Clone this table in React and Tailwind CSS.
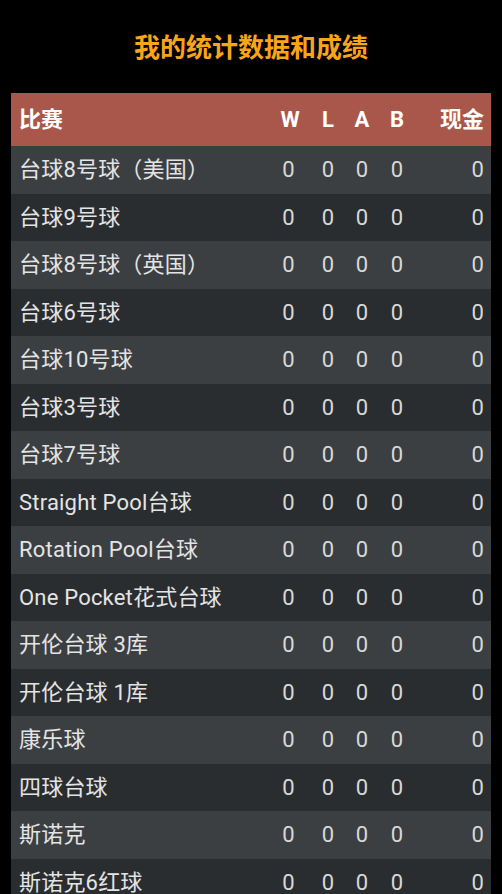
const rows = [
  "台球8号球（美国）",
  "台球9号球",
  "台球8号球（英国）",
  "台球6号球",
  "台球10号球",
  "台球3号球",
  "台球7号球",
  "Straight Pool台球",
  "Rotation Pool台球",
  "One Pocket花式台球",
  "开伦台球 3库",
  "开伦台球 1库",
  "康乐球",
  "四球台球",
  "斯诺克",
  "斯诺克6红球",
];

const font = { fontFamily: "Roboto, 'Noto Sans CJK SC', sans-serif" };

export default function App() {
  return (
    <div className="min-h-screen bg-black" style={font}>
      <div className="flex h-[93px] items-center justify-center pt-[3px]">
        <h1 className="text-[26px] font-bold text-[#f9a51a]">我的统计数据和成绩</h1>
      </div>
      <div className="mx-[11px]">
        <div className="flex h-[53px] items-center bg-[#a9574a] pl-[8px] pr-[7px] text-[22px] font-bold text-white">
          <div className="flex-1">比赛</div>
          <div className="w-[38px] text-center">W</div>
          <div className="w-[38px] text-center">L</div>
          <div className="w-[30px] text-center">A</div>
          <div className="w-[40px] text-center">B</div>
          <div className="w-[67px] text-right">现金</div>
        </div>
        {rows.map((name, i) => (
          <div
            key={name}
            className={`flex h-[47.5px] items-center pl-[8px] pr-[7px] text-[22px] tracking-[0.2px] text-[#e4e4e4] ${
              i % 2 === 0 ? "bg-[#3c3f42]" : "bg-[#2a2d30]"
            }`}
          >
            <div className="flex-1 truncate">{name}</div>
            <div className="w-[38px] pr-[3px] text-center text-[#d8d8d8]">0</div>
            <div className="w-[38px] text-center text-[#d8d8d8]">0</div>
            <div className="w-[30px] text-center text-[#d8d8d8]">0</div>
            <div className="w-[40px] text-center text-[#d8d8d8]">0</div>
            <div className="w-[67px] text-right text-[#d8d8d8]">0</div>
          </div>
        ))}
      </div>
    </div>
  );
}
